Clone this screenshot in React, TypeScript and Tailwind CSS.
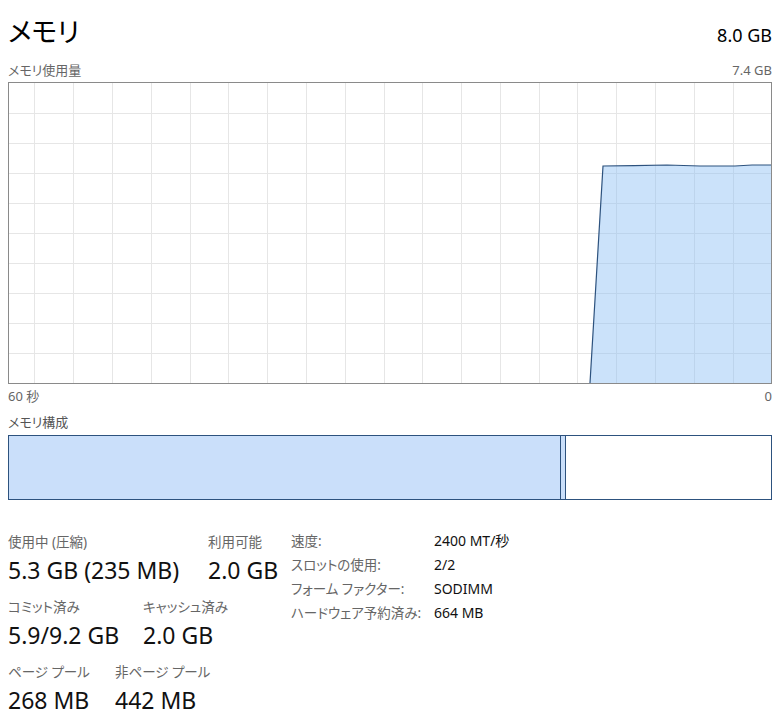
const GRID_X = Array.from({ length: 19 }, (_, i) => Math.round(25.3 + i * 38.8) + 0.5);
const GRID_Y = Array.from({ length: 9 }, (_, i) => (i + 1) * 30 + 0.5);

// usage curve, in chart-inner pixels (762 x 300)
const USAGE: [number, number][] = [
  [581, 300],
  [594, 83],
  [625, 82.6],
  [658, 82],
  [691, 83],
  [726, 83],
  [743, 82],
  [762, 82],
];

function UsageChart() {
  const line = USAGE.map(([x, y]) => `${x},${y}`).join(" ");
  const area = `${line} 762,300`;
  return (
    <div className="mt-[4px] h-[302px] border border-[#8a8a8a]">
      <svg width="762" height="300" viewBox="0 0 762 300" className="block">
        {GRID_X.map((x) => (
          <line key={`x${x}`} x1={x} y1={0} x2={x} y2={300} stroke="#e6e6e6" strokeWidth={1} shapeRendering="crispEdges" />
        ))}
        {GRID_Y.map((y) => (
          <line key={`y${y}`} x1={0} y1={y} x2={762} y2={y} stroke="#e6e6e6" strokeWidth={1} shapeRendering="crispEdges" />
        ))}
        <polygon points={area} fill="rgb(140,190,245)" fillOpacity={0.45} />
        <polyline points={line} fill="none" stroke="#2d527e" strokeWidth={1.2} />
      </svg>
    </div>
  );
}

function Stat({ label, value, className }: { label: string; value: string; className?: string }) {
  return (
    <div className={className}>
      <div className="text-[13.5px] leading-[18px] text-[#666]">{label}</div>
      <div className="mt-[5px] text-[23px] leading-[28px] text-[#111]">{value}</div>
    </div>
  );
}

const SPECS = [
  ["速度:", "2400 MT/秒"],
  ["スロットの使用:", "2/2"],
  ["フォーム ファクター:", "SODIMM"],
  ["ハードウェア予約済み:", "664 MB"],
];

export default function App() {
  return (
    <div className="min-h-screen bg-white pl-2 pr-[10px] pt-[14px] text-[#111] font-['Noto_Sans','Noto_Sans_CJK_JP',sans-serif] [font-feature-settings:'palt']">
      <div className="flex items-baseline justify-between">
        <h1 className="text-[27px] leading-[36px] font-normal text-black">メモリ</h1>
        <span className="text-[18px] leading-[24px] text-black">8.0 GB</span>
      </div>

      <div className="mt-[12px] flex justify-between text-[13px] leading-[16px] text-[#666]">
        <span>メモリ使用量</span>
        <span>7.4 GB</span>
      </div>
      <UsageChart />
      <div className="mt-[4px] flex justify-between text-[13px] leading-[16px] text-[#666]">
        <span>60 秒</span>
        <span>0</span>
      </div>

      <div className="mt-[10px] text-[13px] leading-[16px] text-[#555]">メモリ構成</div>
      <div className="mt-[5px] flex h-[65px] border border-[#2d527e]">
        <div className="w-[552px] border-r border-[#2d527e] bg-[#cadffa]" />
        <div className="w-[5px] border-r border-[#2d527e] bg-[#cadffa]" />
        <div className="flex-1 bg-white" />
      </div>

      <div className="mt-[29px] flex items-start">
        <div className="w-[283px] pt-[4px]">
          <div className="flex">
            <Stat className="w-[200px]" label="使用中 (圧縮)" value="5.3 GB (235 MB)" />
            <Stat label="利用可能" value="2.0 GB" />
          </div>
          <div className="mt-[14px] flex">
            <Stat className="w-[135px]" label="コミット済み" value="5.9/9.2 GB" />
            <Stat label="キャッシュ済み" value="2.0 GB" />
          </div>
          <div className="mt-[14px] flex">
            <Stat className="w-[107px]" label="ページ プール" value="268 MB" />
            <Stat label="非ページ プール" value="442 MB" />
          </div>
        </div>
        <div className="grid grid-cols-[143px_1fr] content-start text-[13.5px] leading-[24px]">
          {SPECS.map(([k, v]) => (
            <div key={k} className="contents">
              <span className="text-[#666]">{k}</span>
              <span className="text-[14px] text-[#111]">{v}</span>
            </div>
          ))}
        </div>
      </div>
    </div>
  );
}
